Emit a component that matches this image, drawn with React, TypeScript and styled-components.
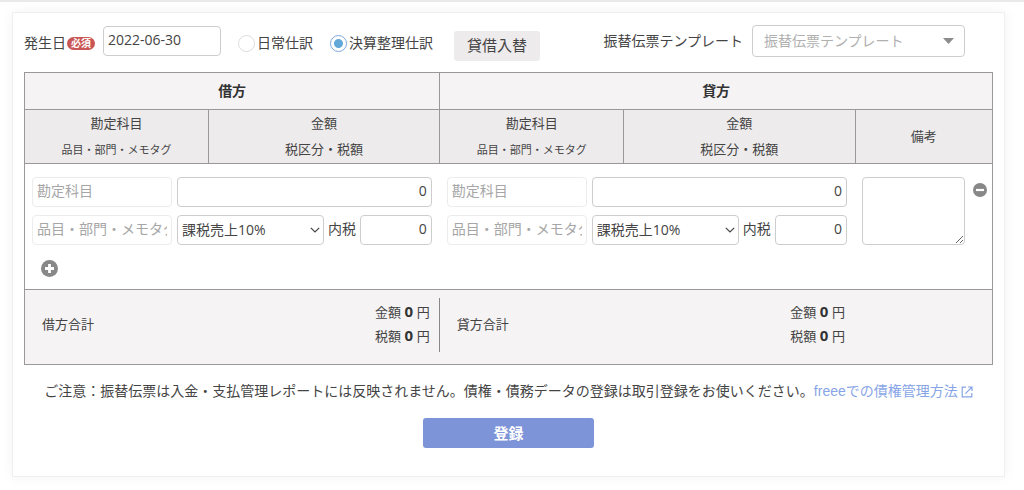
import React from "react";
import styled, { createGlobalStyle } from "styled-components";

const GlobalStyle = createGlobalStyle`
  * { box-sizing: border-box; }
  body {
    margin: 0;
    background: #fff;
    color: #444;
    font: 14px/20px "Liberation Sans", "Noto Sans CJK JP", sans-serif;
  }
  input, select, textarea, button {
    margin: 0;
    color: inherit;
    font: 14px/20px "Open Sans", "Noto Sans CJK JP", sans-serif;
  }
`;

const Page = styled.main`
  border-top: 2px solid #e9e9e9;
  padding: 10px 19px 12px 12px;
`;

const Card = styled.form`
  padding: 11px 11px 28px;
  background: #fff;
  border: 1px solid #efefef;
  box-shadow: 0 0 12px rgba(0, 0, 0, 0.05);
`;

const Toolbar = styled.div`
  display: flex;
  align-items: flex-start;
  justify-content: space-between;
  height: 48px;
  padding-right: 28px;
`;

const ToolGroup = styled.div`
  display: flex;
  align-items: center;
  height: 34px;
`;

const EntryGroup = styled(ToolGroup)`
  height: 38px;
`;

const Badge = styled.span`
  margin: 0 8px 0 1px;
  padding: 0 4px;
  border-radius: 7px;
  background: #c95654;
  color: #fff;
  font-size: 10px;
  font-weight: 700;
  line-height: 13px;
`;

const Field = styled.input<{ $faint?: boolean; $number?: boolean }>`
  width: 100%;
  min-width: 0;
  height: 30px;
  padding: 0 4px 3px;
  border: 1px solid ${(p) => (p.$faint ? "#ececec" : "#cdcdcd")};
  border-radius: 4px;
  background: #fff;
  outline: none;
  text-align: ${(p) => (p.$number ? "right" : "left")};
  &::placeholder { color: #a6a6a6; opacity: 1; }
`;

const DateField = styled(Field)`
  width: 118px;
  margin-bottom: 4px;
`;

const RadioLabel = styled.label`
  display: flex;
  align-items: center;
  gap: 2px;
  margin-left: 17px;
`;

const Radio = styled.input`
  appearance: none;
  width: 17px;
  height: 17px;
  border: 1px solid #dcdcdc;
  border-radius: 50%;
  background: #fff;
  &:checked {
    border-color: #7fa9dd;
    background: radial-gradient(circle, #62a8d8 4px, #fff 5px);
  }
`;

const SwapButton = styled.button`
  height: 30px;
  margin: 5px 0 0 21px;
  padding: 0 13px 2px;
  border: 0;
  border-radius: 3px;
  background: #eeebec;
  font-size: 15px;
`;

const TemplateLabel = styled.label`
  margin-right: 9px;
`;

const SelectBox = styled.span<{ $width: number }>`
  position: relative;
  display: block;
  flex: none;
  width: ${(p) => p.$width}px;
  svg {
    position: absolute;
    top: 50%;
    right: 3px;
    transform: translateY(-50%);
    pointer-events: none;
  }
`;

const Select = styled.select`
  appearance: none;
  display: block;
  width: 100%;
  height: 30px;
  padding: 0 20px 0 4px;
  border: 1px solid #cdcdcd;
  border-radius: 4px;
  background: #fff;
  outline: none;
`;

const TemplateBox = styled(SelectBox)`
  svg { right: 11px; }
`;

const TemplateSelect = styled(Select)`
  height: 32px;
  padding-left: 11px;
  color: #b0b0b0;
`;

const Journal = styled.table`
  width: 100%;
  table-layout: fixed;
  border-collapse: collapse;
  border: 1px solid #999;
`;

const Col = styled.col<{ $width: string }>`
  width: ${(p) => p.$width};
`;

const SideHead = styled.th`
  height: 37px;
  padding: 0;
  border: 1px solid #999;
  background: #f5f3f4;
  color: #333;
  font-size: 14px;
`;

const ColumnHead = styled.th`
  height: 54px;
  padding: 0;
  border: 1px solid #999;
  background: #eeebec;
  font-size: 13px;
  font-weight: 400;
  line-height: 26px;
`;

const HeadLine = styled.span<{ $small?: boolean }>`
  display: block;
  font-size: ${(p) => (p.$small ? 11 : 13)}px;
`;

const EntryRow = styled.tr`
  height: 126px;
  vertical-align: top;
`;

const EntryCell = styled.td`
  padding: 13px 8px 0 7px;
`;

const EntryGrid = styled.div`
  display: grid;
  grid-template-columns: 140px minmax(0, 1fr);
  gap: 8px 5px;
`;

const TaxLine = styled.div`
  display: flex;
  align-items: center;
  gap: 4px;
`;

const TaxLabel = styled.label`
  flex: none;
  padding-bottom: 3px;
`;

const MemoLine = styled.div`
  display: flex;
  align-items: flex-start;
  justify-content: space-between;
  gap: 8px;
  margin-right: -3px;
`;

const Memo = styled.textarea`
  flex: 1;
  min-width: 0;
  height: 68px;
  padding: 4px;
  border: 1px solid #cdcdcd;
  border-radius: 4px;
  background: #fff;
  outline: none;
`;

const IconButton = styled.button`
  display: block;
  flex: none;
  padding: 0;
  border: 0;
  background: none;
  svg { display: block; }
`;

const AddButton = styled(IconButton)`
  margin: 15px 0 0 9px;
`;

const RemoveButton = styled(IconButton)`
  margin-top: 6px;
`;

const TotalRow = styled.tr`
  height: 75px;
  border-top: 1px solid #999;
  background: #f5f3f4;
  vertical-align: top;
  font-size: 13px;
`;

const TotalCell = styled.td`
  padding: 8px 0 0;
`;

const Total = styled.div<{ $divided?: boolean }>`
  display: flex;
  align-items: center;
  justify-content: space-between;
  height: 54px;
  padding: 0 9px 0 17px;
  border-right: 1px solid ${(p) => (p.$divided ? "#888" : "transparent")};
`;

const Amounts = styled.div`
  line-height: 24px;
  text-align: right;
  strong {
    color: #333;
    font: 700 15px/20px "Open Sans", sans-serif;
  }
`;

const Notice = styled.p`
  margin: 16px 0 17px;
  text-align: center;
`;

const HelpLink = styled.a`
  color: #87a5e6;
  text-decoration: none;
  svg { margin-left: 3px; vertical-align: -2px; }
`;

const Submit = styled.button`
  display: block;
  width: 171px;
  height: 30px;
  margin: 0 auto;
  border: 0;
  border-radius: 3px;
  background: #7e94d8;
  color: #fff;
  font-size: 15px;
  font-weight: 700;
`;

const Chevron = () => (
  <svg width="12" height="8" viewBox="0 0 12 8" fill="none" stroke="#444" strokeWidth="1.2" aria-hidden="true">
    <path d="M1.8 1.8 6 6l4.2-4.2" />
  </svg>
);

const Triangle = () => (
  <svg width="11" height="6" viewBox="0 0 11 6" fill="#8c8c8c" aria-hidden="true">
    <path d="M0 0h11L5.5 6z" />
  </svg>
);

const PlusIcon = () => (
  <svg width="17" height="17" viewBox="0 0 17 17" aria-hidden="true">
    <circle cx="8.5" cy="8.5" r="8.5" fill="#888" />
    <path d="M8.5 4v9M4 8.5h9" stroke="#fff" strokeWidth="2.8" />
  </svg>
);

const MinusIcon = () => (
  <svg width="14" height="14" viewBox="0 0 14 14" aria-hidden="true">
    <circle cx="7" cy="7" r="7" fill="#888" />
    <path d="M3 7h8" stroke="#fff" strokeWidth="2.2" />
  </svg>
);

const ExternalIcon = () => (
  <svg width="12" height="12" viewBox="0 0 12 12" fill="none" stroke="currentColor" strokeWidth="1.2" aria-hidden="true">
    <path d="M5 1.2H1.2v9.6h9.6V7M7 1h4v4M11 1 4.4 7.6" />
  </svg>
);

const SIDES = [
  { id: "debit", name: "借方" },
  { id: "credit", name: "貸方" },
];

function EntryFields({ id, name, addable }: { id: string; name: string; addable?: boolean }) {
  return (
    <EntryCell colSpan={2}>
      <EntryGrid>
        <Field $faint placeholder="勘定科目" aria-label={`${name} 勘定科目`} />
        <Field $number defaultValue="0" aria-label={`${name} 金額`} />
        <Field $faint placeholder="品目・部門・メモタグ" aria-label={`${name} 品目・部門・メモタグ`} />
        <TaxLine>
          <SelectBox $width={147}>
            <Select aria-label={`${name} 税区分`}>
              <option>課税売上10%</option>
            </Select>
            <Chevron />
          </SelectBox>
          <TaxLabel htmlFor={`${id}-tax`}>内税</TaxLabel>
          <Field id={`${id}-tax`} $number defaultValue="0" />
        </TaxLine>
      </EntryGrid>
      {addable && (
        <AddButton type="button" aria-label="行を追加">
          <PlusIcon />
        </AddButton>
      )}
    </EntryCell>
  );
}

export default function App() {
  return (
    <>
      <GlobalStyle />
      <Page>
        <Card onSubmit={(e: React.FormEvent) => e.preventDefault()}>
          <Toolbar>
            <EntryGroup>
              <label htmlFor="date">発生日</label>
              <Badge>必須</Badge>
              <DateField id="date" defaultValue="2022-06-30" />
              <RadioLabel>
                <Radio type="radio" name="kind" />
                日常仕訳
              </RadioLabel>
              <RadioLabel>
                <Radio type="radio" name="kind" defaultChecked />
                決算整理仕訳
              </RadioLabel>
              <SwapButton type="button">貸借入替</SwapButton>
            </EntryGroup>
            <ToolGroup>
              <TemplateLabel htmlFor="template">振替伝票テンプレート</TemplateLabel>
              <TemplateBox $width={213}>
                <TemplateSelect id="template">
                  <option>振替伝票テンプレート</option>
                </TemplateSelect>
                <Triangle />
              </TemplateBox>
            </ToolGroup>
          </Toolbar>

          <Journal>
            <colgroup>
              <Col $width="19%" />
              <Col $width="23.9%" />
              <Col $width="19%" />
              <Col $width="23.9%" />
              <Col $width="14.2%" />
            </colgroup>
            <thead>
              <tr>
                <SideHead colSpan={2}>借方</SideHead>
                <SideHead colSpan={3}>貸方</SideHead>
              </tr>
              <tr>
                {SIDES.map((side) => (
                  <React.Fragment key={side.id}>
                    <ColumnHead>
                      <HeadLine>勘定科目</HeadLine>
                      <HeadLine $small>品目・部門・メモタグ</HeadLine>
                    </ColumnHead>
                    <ColumnHead>
                      <HeadLine>金額</HeadLine>
                      <HeadLine>税区分・税額</HeadLine>
                    </ColumnHead>
                  </React.Fragment>
                ))}
                <ColumnHead>備考</ColumnHead>
              </tr>
            </thead>
            <tbody>
              <EntryRow>
                <EntryFields id="debit" name="借方" addable />
                <EntryFields id="credit" name="貸方" />
                <EntryCell>
                  <MemoLine>
                    <Memo aria-label="備考" />
                    <RemoveButton type="button" aria-label="行を削除">
                      <MinusIcon />
                    </RemoveButton>
                  </MemoLine>
                </EntryCell>
              </EntryRow>
            </tbody>
            <tfoot>
              <TotalRow>
                {SIDES.map((side) => (
                  <TotalCell key={side.id} colSpan={2}>
                    <Total $divided={side.id === "debit"}>
                      <span>{side.name}合計</span>
                      <Amounts>
                        <div>金額 <strong>0</strong> 円</div>
                        <div>税額 <strong>0</strong> 円</div>
                      </Amounts>
                    </Total>
                  </TotalCell>
                ))}
                <TotalCell />
              </TotalRow>
            </tfoot>
          </Journal>

          <Notice>
            ご注意：振替伝票は入金・支払管理レポートには反映されません。債権・債務データの登録は取引登録をお使いください。
            <HelpLink href="#receivables">
              freeeでの債権管理方法
              <ExternalIcon />
            </HelpLink>
          </Notice>
          <Submit type="submit">登録</Submit>
        </Card>
      </Page>
    </>
  );
}
